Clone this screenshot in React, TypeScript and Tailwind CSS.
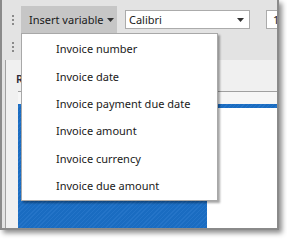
import React from "react";

const items = [
  "Invoice number",
  "Invoice date",
  "Invoice payment due date",
  "Invoice amount",
  "Invoice currency",
  "Invoice due amount",
];

const Grip = () => (
  <div className="flex flex-col gap-[2px] pl-[10px]">
    <span className="w-[2px] h-[2px] bg-[#8a8a8a]" />
    <span className="w-[2px] h-[2px] bg-[#8a8a8a]" />
    <span className="w-[2px] h-[2px] bg-[#8a8a8a]" />
  </div>
);

const Caret = () => (
  <svg width="7" height="4" viewBox="0 0 7 4" className="shrink-0">
    <path d="M0 0h7L3.5 4z" fill="#333" />
  </svg>
);

const App = () => {
  return (
    <div
      className="w-[287px] h-[240px] bg-white overflow-hidden text-[11px] text-[#1a1a1a]"
      style={{ fontFamily: '"Noto Sans", "DejaVu Sans", sans-serif' }}
    >
      <div className="relative w-[279px] h-[230px] border-2 border-t-0 border-[#8a8a8a] bg-[#e3e3e3] shadow-[3px_3px_5px_rgba(0,0,0,0.45)] flex flex-col overflow-hidden">
        {/* toolbar row 1 */}
        <div className="h-[33px] flex items-start shrink-0">
          <div className="w-[19px] shrink-0 pt-[15px]">
            <Grip />
          </div>
          <div className="mt-[6px] h-[27px] w-[96px] shrink-0 bg-[#c6c6c6] flex items-center pl-[8px] gap-[3px] leading-none whitespace-nowrap">
            <span>Insert variable</span>
            <Caret />
          </div>
          <div className="ml-[8px] mt-[10px] h-[19px] w-[125px] shrink-0 bg-white border border-[#ababab] flex items-center justify-between pl-[3px] pr-[5px] leading-none">
            <span>Calibri</span>
            <Caret />
          </div>
          <div className="ml-[16px] mt-[10px] h-[19px] w-[40px] shrink-0 bg-white border border-[#ababab] flex items-center pl-[6px] leading-none">
            <span>11</span>
          </div>
        </div>
        {/* toolbar row 2 */}
        <div className="h-[27px] shrink-0 pt-[9px]">
          <Grip />
        </div>
        {/* content */}
        <div className="flex-1 flex min-h-0">
          <div className="w-[3px] shrink-0 bg-[#e3e3e3]" />
          <div className="flex-1 flex flex-col bg-[#f0f0f0] border-l border-[#a0a0a0]">
            <div className="h-[31px] shrink-0 pl-[10px] pt-[13px] leading-none font-semibold text-[#2a2a3a]">
              R
            </div>
            <div className="ml-[12px] flex-1 flex flex-col border-t border-[#a0a0a0] bg-white">
              <div className="h-[12px] shrink-0 bg-[#f6f6f6]" />
              <div className="flex-1 flex">
                <div className="w-[189px] shrink-0 bg-[repeating-linear-gradient(135deg,#1a6cc1_0px,#1a6cc1_2px,#2474c8_2px,#2474c8_3px)]" />
                <div className="flex-1 flex flex-col">
                  <div className="h-[4px] bg-[repeating-linear-gradient(135deg,#1a6cc1_0px,#1a6cc1_2px,#2474c8_2px,#2474c8_3px)]" />
                  <div className="flex-1 bg-white" />
                </div>
              </div>
            </div>
          </div>
        </div>

        {/* dropdown menu */}
        <div className="absolute left-[19px] top-[33px] w-[197px] h-[168px] bg-white border border-[#a8a8a8] shadow-[2px_2px_2px_rgba(0,0,0,0.35)] pt-[1px]">
          {items.map((label) => (
            <div
              key={label}
              className="h-[27.4px] flex items-center pl-[34px] leading-none whitespace-nowrap"
            >
              {label}
            </div>
          ))}
        </div>
      </div>
    </div>
  );
};

export default App;
